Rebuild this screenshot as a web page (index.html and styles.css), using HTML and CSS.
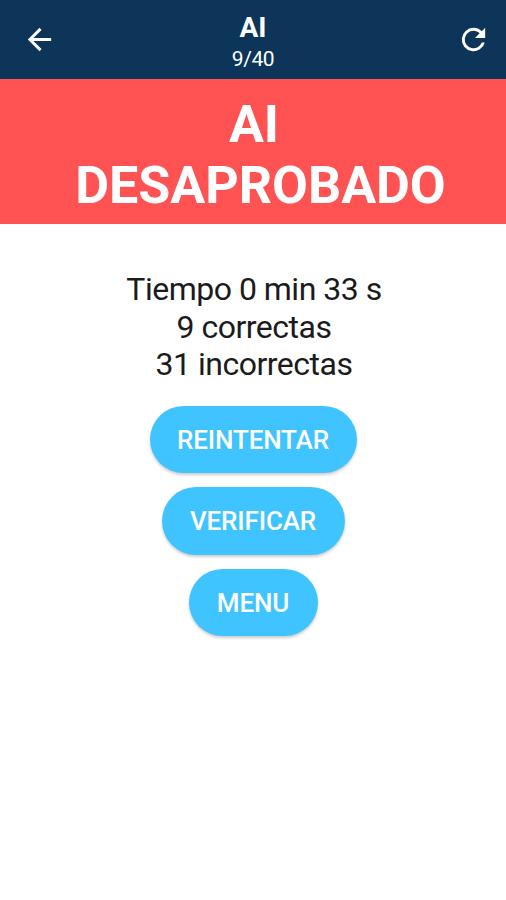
FILE: index.html
```html
<!DOCTYPE html>
<html lang="es">
<head>
<meta charset="utf-8">
<title>AI</title>
<link rel="stylesheet" href="styles.css">
</head>
<body>
<header class="bar">
  <svg class="icon" viewBox="0 0 24 24"><path d="M20 11H7.83l5.59-5.59L12 4l-8 8 8 8 1.41-1.41L7.83 13H20v-2z"/></svg>
  <div class="heading">
    <h1 class="title">AI</h1>
    <div class="score">9/40</div>
  </div>
  <svg class="icon" viewBox="0 0 24 24"><path d="M17.65 6.35A7.958 7.958 0 0 0 12 4a8 8 0 1 0 7.73 10h-2.08A6 6 0 1 1 12 6c1.66 0 3.14.69 4.22 1.78L13 11h7V4l-2.35 2.35z"/></svg>
</header>
<section class="banner">
  <div class="banner-name">AI</div>
  <div class="banner-result">DESAPROBADO</div>
</section>
<main class="content">
  <div class="stats">
    <div class="time">Tiempo 0 min 33 s</div>
    <div class="right">9 correctas</div>
    <div class="wrong">31 incorrectas</div>
  </div>
  <button class="btn retry">REINTENTAR</button>
  <button class="btn verify">VERIFICAR</button>
  <button class="btn menu">MENU</button>
</main>
</body>
</html>
```

FILE: styles.css
```css
* { box-sizing: border-box; }
body { margin: 0; min-height: 900px; background: #fff; font-family: Roboto, sans-serif; color: #1b1b1b; }
.bar { height: 79px; padding: 0 15px 0 22px; background: #0c3559; color: #fff; display: grid; grid-template-columns: 35px 1fr 35px; align-items: center; }
.icon { width: 35px; height: 35px; fill: currentColor; }
.heading { text-align: center; padding: 5px 7px 0 0; }
.title { margin: 0; font-size: 28px; line-height: 34px; font-weight: 700; }
.score { font-size: 21px; line-height: 29px; letter-spacing: -0.4px; }
.banner { height: 145px; padding-top: 16px; background: #ff5252; color: #fff; text-align: center; font-weight: 700; font-size: 52px; line-height: 60px; }
.banner-name { padding-left: 2px; }
.banner-result { padding-left: 15px; line-height: 61px; }
.content { display: flex; flex-direction: column; align-items: center; gap: 14px; padding-top: 47px; }
.stats { text-align: center; font-size: 32px; line-height: 37.5px; letter-spacing: -0.5px; margin-bottom: 8px; padding-left: 2px; }
.btn { height: 67.5px; padding: 1px 0 0; border: 0; border-radius: 34px; background: #40c4ff; color: #fff; font: 500 26px Roboto, sans-serif; letter-spacing: -0.15px; box-shadow: 0 2px 3px rgba(0,0,0,.2); }
.retry { width: 207px; }
.verify { width: 183px; }
.menu { width: 129px; }
```
